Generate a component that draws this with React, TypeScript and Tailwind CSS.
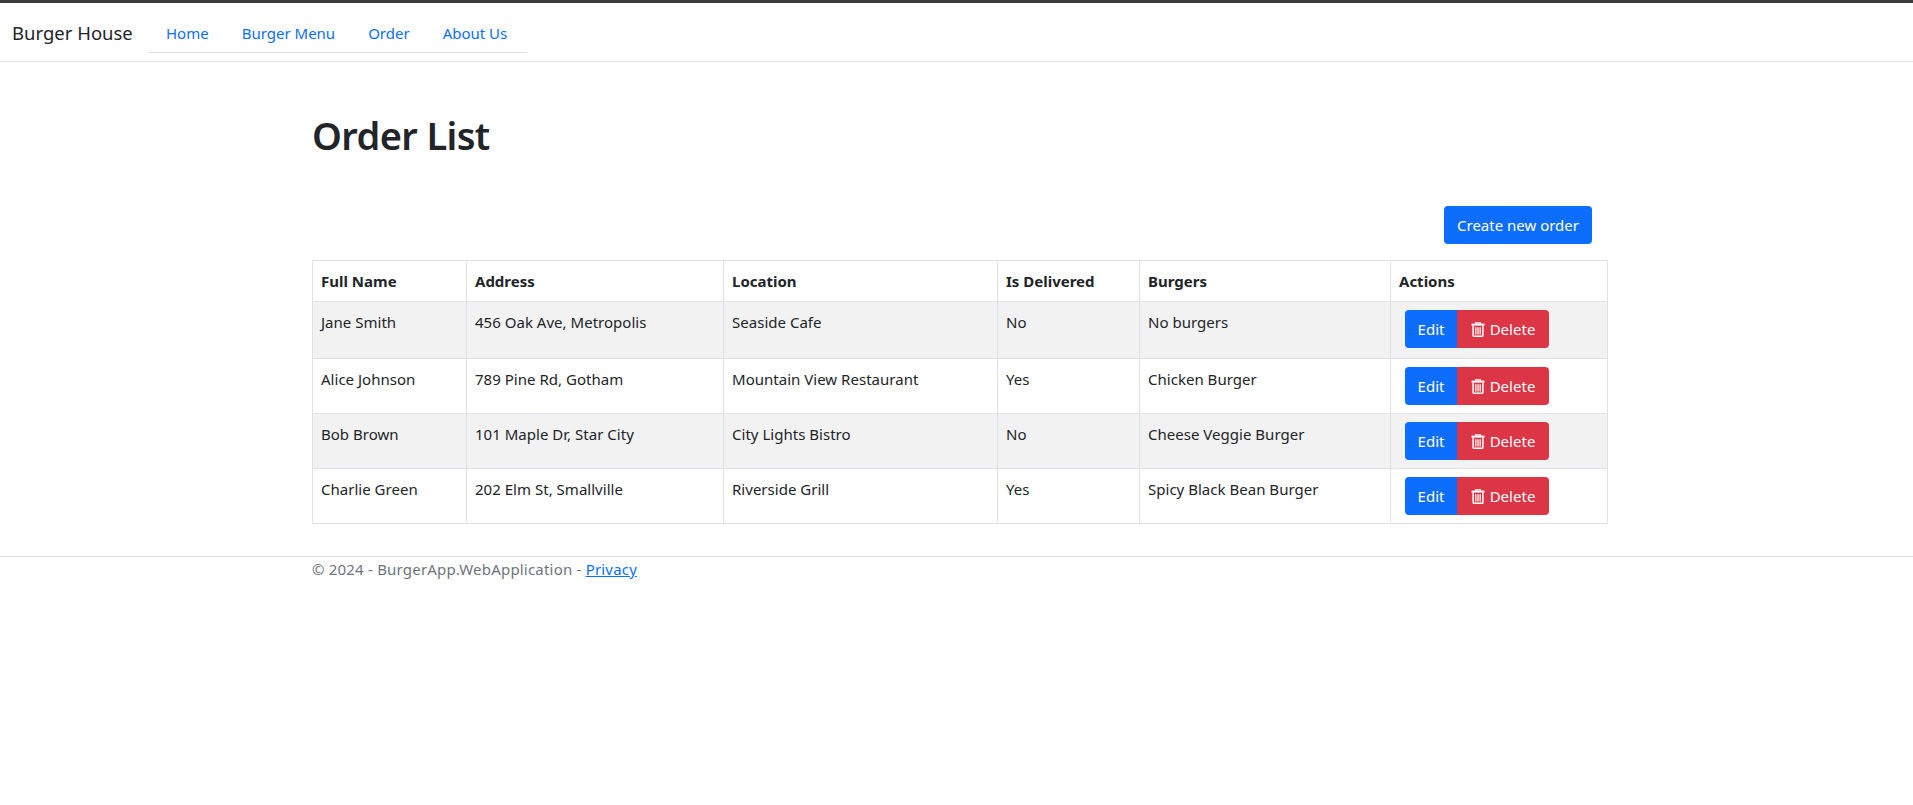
const rows = [
  { name: "Jane Smith", address: "456 Oak Ave, Metropolis", location: "Seaside Cafe", delivered: "No", burgers: "No burgers", h: "h-[57px]", bg: "bg-[#f2f2f2]" },
  { name: "Alice Johnson", address: "789 Pine Rd, Gotham", location: "Mountain View Restaurant", delivered: "Yes", burgers: "Chicken Burger", h: "h-[55px]", bg: "bg-white" },
  { name: "Bob Brown", address: "101 Maple Dr, Star City", location: "City Lights Bistro", delivered: "No", burgers: "Cheese Veggie Burger", h: "h-[55px]", bg: "bg-[#f2f2f2]" },
  { name: "Charlie Green", address: "202 Elm St, Smallville", location: "Riverside Grill", delivered: "Yes", burgers: "Spicy Black Bean Burger", h: "h-[55px]", bg: "bg-white" },
];

const th = "border border-[#dee2e6] px-2 py-2 text-left font-bold text-[15px] leading-[24px] align-top";
const td = "border border-[#dee2e6] px-2 py-2 align-top text-[15px] leading-[24px] tracking-[0.02px]";

function TrashIcon() {
  return (
    <svg width="14" height="15" viewBox="0 0 14 15" fill="none" stroke="currentColor" className="shrink-0">
      <path d="M0.5 2.6H13.5" strokeWidth="2" />
      <path d="M4.6 2V0.8H9.4V2" strokeWidth="1.3" />
      <path d="M2.1 3.5V13.2C2.1 14 2.5 14.3 3.2 14.3H10.8C11.5 14.3 11.9 14 11.9 13.2V3.5" strokeWidth="1.5" />
      <path d="M4.8 5.2V12.6M7 5.2V12.6M9.2 5.2V12.6" strokeWidth="1.3" />
    </svg>
  );
}

export default function App() {
  return (
    <div className="min-h-[805px] bg-white text-[#212529] font-['Noto_Sans','Open_Sans',sans-serif]">
      <div className="h-[3px] bg-[#3a3a3a]" />
      <nav className="flex h-[59px] items-start border-b border-[#dee2e6] pl-3">
        <a className="mt-[16px] mr-4 w-[121px] whitespace-nowrap text-[18.5px] leading-[27px] text-[#212529]">Burger House</a>
        <ul className="mt-[9px] flex h-[41px] w-[378px] gap-[1px] border-b border-[#dee2e6] pl-px text-[15px] text-[#0d6efd]">
          <li className="px-4 pt-[9px] leading-[24px]">Home</li>
          <li className="px-4 pt-[9px] leading-[24px]">Burger Menu</li>
          <li className="px-4 pt-[9px] leading-[24px]">Order</li>
          <li className="px-4 pt-[9px] leading-[24px]">About Us</li>
        </ul>
      </nav>
      <main className="ml-[312px] w-[1296px] pt-[49px]">
        <h1 className="text-[38px] leading-[48px] font-semibold tracking-[-0.6px] text-[#212529]">Order List</h1>
        <div className="mt-[47px] flex justify-end pr-[16px]">
          <button className="h-[38px] w-[148px] rounded-[4px] bg-[#0d6efd] text-[15px] text-white">Create new order</button>
        </div>
        <table className="mt-[16px] w-[1295px] table-fixed border-collapse">
          <colgroup>
            <col className="w-[154px]" />
            <col className="w-[257px]" />
            <col className="w-[274px]" />
            <col className="w-[142px]" />
            <col className="w-[251px]" />
            <col className="w-[217px]" />
          </colgroup>
          <thead>
            <tr className="h-[41px]">
              <th className={th}>Full Name</th>
              <th className={th}>Address</th>
              <th className={th}>Location</th>
              <th className={th}>Is Delivered</th>
              <th className={th}>Burgers</th>
              <th className={th}>Actions</th>
            </tr>
          </thead>
          <tbody>
            {rows.map((r) => (
              <tr key={r.name} className={`${r.h} ${r.bg}`}>
                <td className={td}>{r.name}</td>
                <td className={td}>{r.address}</td>
                <td className={td}>{r.location}</td>
                <td className={td}>{r.delivered}</td>
                <td className={td}>{r.burgers}</td>
                <td className={td}>
                  <div className="ml-[6px] flex w-[144px]">
                    <button className="h-[38px] w-[52px] rounded-l-[4px] bg-[#0d6efd] text-white">Edit</button>
                    <button className="flex h-[38px] w-[92px] items-center justify-center gap-[5px] rounded-r-[4px] bg-[#dc3545] text-white">
                      <TrashIcon />
                      Delete
                    </button>
                  </div>
                </td>
              </tr>
            ))}
          </tbody>
        </table>
      </main>
      <footer className="mt-[32px] border-t border-[#dee2e6] pl-[312px] text-[15px] leading-[24px] tracking-[0.2px] text-[#6c757d]">
        © 2024 - BurgerApp.WebApplication - <a className="text-[#0d6efd] underline">Privacy</a>
      </footer>
    </div>
  );
}
